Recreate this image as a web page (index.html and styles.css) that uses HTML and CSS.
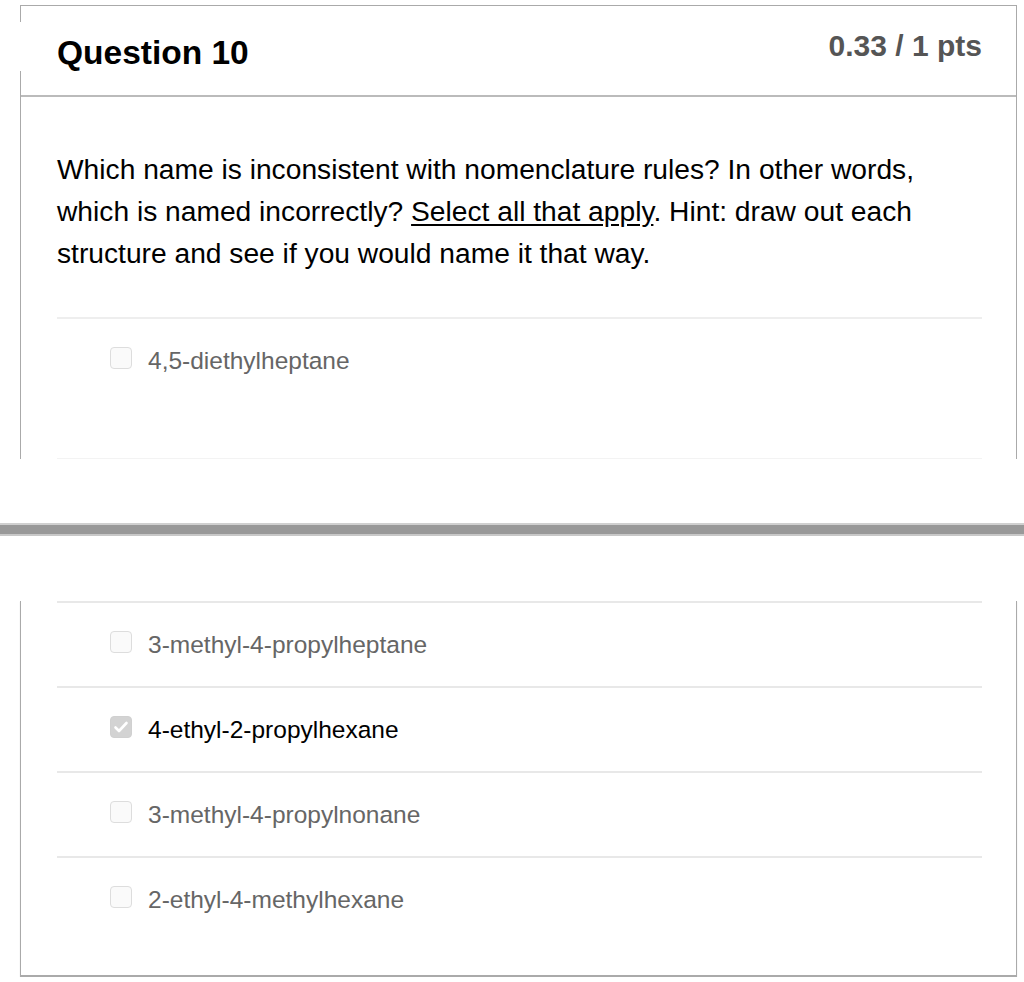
FILE: index.html
```html
<!DOCTYPE html>
<html lang="en">
<head>
    <meta charset="UTF-8">
    <meta name="viewport" content="width=device-width, initial-scale=1.0">
    <title>Question 10</title>
    <link rel="stylesheet" href="styles.css">
</head>
<body>
    <!-- Top of the question -->
    <div class="shot shot-top">
        <div class="card">
            <div class="question-header">
                <h2 class="question-name">Question 10</h2>
                <div class="question-points">0.33 / 1 pts</div>
            </div>
            <div class="question-text">
                Which name is inconsistent with nomenclature rules? In other words, which is named incorrectly? <u>Select all that apply</u>. Hint: draw out each structure and see if you would name it that way.
            </div>
            <div class="answers">
                <div class="answer answer-first">
                    <span class="checkbox"></span>
                    <span class="answer-label">4,5-diethylheptane</span>
                </div>
                <div class="answer-cut"></div>
            </div>
        </div>
    </div>

    <div class="fold"></div>

    <!-- Rest of the answers -->
    <div class="shot shot-bottom">
        <div class="card">
            <div class="answers">
                <div class="answer">
                    <span class="checkbox"></span>
                    <span class="answer-label">3-methyl-4-propylheptane</span>
                </div>
                <div class="answer selected">
                    <span class="checkbox checked">
                        <svg width="20" height="20" viewBox="0 0 20 20"><path d="M4.5 10.5l3.5 3.5 7.5-8" fill="none" stroke="#fff" stroke-width="2.6" stroke-linecap="round" stroke-linejoin="round"/></svg>
                    </span>
                    <span class="answer-label">4-ethyl-2-propylhexane</span>
                </div>
                <div class="answer">
                    <span class="checkbox"></span>
                    <span class="answer-label">3-methyl-4-propylnonane</span>
                </div>
                <div class="answer answer-last">
                    <span class="checkbox"></span>
                    <span class="answer-label">2-ethyl-4-methylhexane</span>
                </div>
            </div>
        </div>
    </div>
</body>
</html>
```

FILE: styles.css
```css
/* Global settings */
:root {
    --color-card: #aaa;
    --color-line: #e8e8e8;
    --color-muted: #666;
    --font-default: 'Liberation Sans', Arial, Helvetica, sans-serif;
}

body {
    margin: 0;
    background: #fff;
    color: #000;
    font-family: var(--font-default);
}

/* Card pieces */
.shot {
    padding: 0 7px 0 20px;
}

.shot-top {
    padding-top: 5px;
}

.card {
    border-left: 1px solid var(--color-card);
    border-right: 1px solid var(--color-card);
}

.shot-top .card {
    border-top: 1px solid var(--color-card);
}

.shot-bottom .card {
    border-bottom: 2px solid var(--color-card);
    box-shadow: 0 1px 1px rgba(0, 0, 0, 0.15);
}

/* Header */
.question-header {
    position: relative;
    display: flex;
    justify-content: space-between;
    align-items: flex-start;
    height: 89px;
    padding: 0 34px 0 36px;
    border-bottom: 2px solid #bbb;
}

/* gap in the left edge of the header */
.question-header::before {
    content: "";
    position: absolute;
    left: -1px;
    top: 16px;
    width: 1px;
    height: 49px;
    background: #fff;
}

.question-name {
    margin: 0;
    padding-top: 30px;
    font-size: 33.5px;
    line-height: 33px;
    font-weight: bold;
}

.question-points {
    padding-top: 25px;
    font-size: 30px;
    line-height: 30px;
    font-weight: bold;
    color: #555;
}

/* Question text */
.question-text {
    max-width: 900px;
    padding: 51px 0 0 36px;
    font-size: 28.2px;
    line-height: 42px;
}

.question-text u {
    text-underline-offset: 3px;
}

/* Answers */
.answers {
    margin: 0 34px 0 36px;
}

.shot-top .answers {
    margin-top: 43px;
}

.answer {
    display: flex;
    align-items: flex-start;
    height: 55px;
    padding: 28px 0 0 53px;
    border-top: 2px solid var(--color-line);
}

.answer-first {
    height: 111px;
    border-top-color: #eee;
}

.answer-last {
    height: 89px;
}

.answer-cut {
    height: 1px;
    background: #f3f3f3;
}

.checkbox {
    flex: none;
    display: flex;
    align-items: center;
    justify-content: center;
    width: 20px;
    height: 20px;
    margin-right: 16px;
    border: 1px solid #ddd;
    border-radius: 4px;
    background: #fafafa;
}

.checkbox.checked {
    border-color: #d0d0d0;
    background: #d3d3d3;
}

.answer-label {
    font-size: 24.5px;
    line-height: 28px;
    color: var(--color-muted);
}

.selected .answer-label {
    color: #000;
}

/* Grey band between the two shots */
.fold {
    height: 9px;
    margin: 64px 0 65px;
    background: #999;
    border-top: 2px solid #d0d0d0;
    border-bottom: 2px solid #c8c8c8;
}
```
